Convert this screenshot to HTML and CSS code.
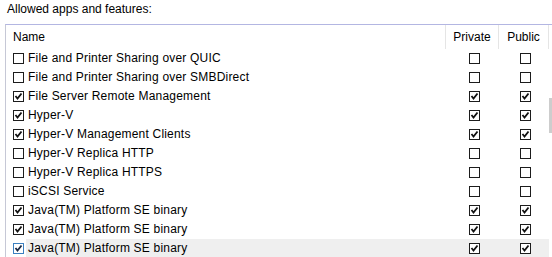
FILE: index.html
```html
<!doctype html>
<html lang="en">
<head>
	<meta charset="UTF-8">
	<title>Allowed apps</title>
	<link rel="stylesheet" href="styles.css">
</head>
<body>
	<div class="caption">Allowed apps and features:</div>
	<div class="list">
		<div class="rows">
			<div class="head">
				<div class="hcell name-h">Name</div>
				<div class="hcell">Private</div>
				<div class="hcell">Public</div>
			</div>

			<div class="row">
				<div class="name"><span class="box"></span><span class="label">File and Printer Sharing over QUIC</span></div>
				<div class="cell"><span class="box"></span></div>
				<div class="cell"><span class="box"></span></div>
			</div>
			<div class="row">
				<div class="name"><span class="box"></span><span class="label">File and Printer Sharing over SMBDirect</span></div>
				<div class="cell"><span class="box"></span></div>
				<div class="cell"><span class="box"></span></div>
			</div>
			<div class="row">
				<div class="name"><span class="box on"><svg viewBox="0 0 9 9"><polyline points="1.5,4 3.5,6.5 7.5,1.5"/></svg></span><span class="label">File Server Remote Management</span></div>
				<div class="cell"><span class="box on"><svg viewBox="0 0 9 9"><polyline points="1.5,4 3.5,6.5 7.5,1.5"/></svg></span></div>
				<div class="cell"><span class="box on"><svg viewBox="0 0 9 9"><polyline points="1.5,4 3.5,6.5 7.5,1.5"/></svg></span></div>
			</div>
			<div class="row">
				<div class="name"><span class="box on"><svg viewBox="0 0 9 9"><polyline points="1.5,4 3.5,6.5 7.5,1.5"/></svg></span><span class="label">Hyper-V</span></div>
				<div class="cell"><span class="box on"><svg viewBox="0 0 9 9"><polyline points="1.5,4 3.5,6.5 7.5,1.5"/></svg></span></div>
				<div class="cell"><span class="box on"><svg viewBox="0 0 9 9"><polyline points="1.5,4 3.5,6.5 7.5,1.5"/></svg></span></div>
			</div>
			<div class="row">
				<div class="name"><span class="box on"><svg viewBox="0 0 9 9"><polyline points="1.5,4 3.5,6.5 7.5,1.5"/></svg></span><span class="label">Hyper-V Management Clients</span></div>
				<div class="cell"><span class="box on"><svg viewBox="0 0 9 9"><polyline points="1.5,4 3.5,6.5 7.5,1.5"/></svg></span></div>
				<div class="cell"><span class="box on"><svg viewBox="0 0 9 9"><polyline points="1.5,4 3.5,6.5 7.5,1.5"/></svg></span></div>
			</div>
			<div class="row">
				<div class="name"><span class="box"></span><span class="label">Hyper-V Replica HTTP</span></div>
				<div class="cell"><span class="box"></span></div>
				<div class="cell"><span class="box"></span></div>
			</div>
			<div class="row">
				<div class="name"><span class="box"></span><span class="label">Hyper-V Replica HTTPS</span></div>
				<div class="cell"><span class="box"></span></div>
				<div class="cell"><span class="box"></span></div>
			</div>
			<div class="row">
				<div class="name"><span class="box"></span><span class="label">iSCSI Service</span></div>
				<div class="cell"><span class="box"></span></div>
				<div class="cell"><span class="box"></span></div>
			</div>
			<div class="row">
				<div class="name"><span class="box on"><svg viewBox="0 0 9 9"><polyline points="1.5,4 3.5,6.5 7.5,1.5"/></svg></span><span class="label">Java(TM) Platform SE binary</span></div>
				<div class="cell"><span class="box on"><svg viewBox="0 0 9 9"><polyline points="1.5,4 3.5,6.5 7.5,1.5"/></svg></span></div>
				<div class="cell"><span class="box on"><svg viewBox="0 0 9 9"><polyline points="1.5,4 3.5,6.5 7.5,1.5"/></svg></span></div>
			</div>
			<div class="row">
				<div class="name"><span class="box on"><svg viewBox="0 0 9 9"><polyline points="1.5,4 3.5,6.5 7.5,1.5"/></svg></span><span class="label">Java(TM) Platform SE binary</span></div>
				<div class="cell"><span class="box on"><svg viewBox="0 0 9 9"><polyline points="1.5,4 3.5,6.5 7.5,1.5"/></svg></span></div>
				<div class="cell"><span class="box on"><svg viewBox="0 0 9 9"><polyline points="1.5,4 3.5,6.5 7.5,1.5"/></svg></span></div>
			</div>
			<div class="row hover">
				<div class="name"><span class="box on focus"><svg viewBox="0 0 9 9"><polyline points="1.5,4 3.5,6.5 7.5,1.5"/></svg></span><span class="label">Java(TM) Platform SE binary</span></div>
				<div class="cell"><span class="box on"><svg viewBox="0 0 9 9"><polyline points="1.5,4 3.5,6.5 7.5,1.5"/></svg></span></div>
				<div class="cell"><span class="box on"><svg viewBox="0 0 9 9"><polyline points="1.5,4 3.5,6.5 7.5,1.5"/></svg></span></div>
			</div>
		</div>
		<div class="scroll"><div class="thumb"></div></div>
	</div>
</body>
</html>
```

FILE: styles.css
```css
html{
	height: 100%;
	overflow: hidden;
}
body{
	margin: 0;
	background: #fff;
	color: #000;
	font-family: "Liberation Sans", Arial, sans-serif;
	font-size: 12px;
}
.caption{
	height: 24px;
	line-height: 18px;
	padding-left: 7px;
}
.list{
	margin-left: 5px;
	border-top: 1px solid #b3b6e2;
	border-left: 1px solid #c6c8d6;
	display: flex;
	height: 240px;
}
.rows{
	width: 543px;
}
.head{
	display: grid;
	grid-template-columns: 440px 53px 50px;
	height: 24px;
}
.hcell{
	border-right: 1px solid #e5e5e5;
	line-height: 24px;
	text-align: center;
}
.name-h{
	text-align: left;
	padding-left: 7px;
}
.row{
	display: grid;
	grid-template-columns: 440px 53px 50px;
	height: 19px;
}
.name{
	display: flex;
	align-items: center;
	padding-left: 7px;
}
.label{
	flex: 1;
	height: 19px;
	line-height: 19px;
	margin-left: 2px;
	padding-left: 2px;
	letter-spacing: 0.2px;
}
.cell{
	display: flex;
	align-items: center;
	justify-content: center;
	padding-left: 3px;
}
.box{
	width: 11px;
	height: 11px;
	box-sizing: border-box;
	border: 1px solid #1c1c1c;
	background: #fff;
	display: flex;
}
.box svg{
	width: 9px;
	height: 9px;
}
.box polyline{
	fill: none;
	stroke: #111;
	stroke-width: 1.8;
}
.box.focus{
	border-color: #3b80c0;
}
.box.focus polyline{
	stroke: #1b2a44;
}
.hover .label,
.hover .cell{
	background: #efefef;
}
.scroll{
	width: 3px;
	background: #fff;
}
.thumb{
	margin-top: 73px;
	height: 35px;
	background: #cdcdcd;
}
```
